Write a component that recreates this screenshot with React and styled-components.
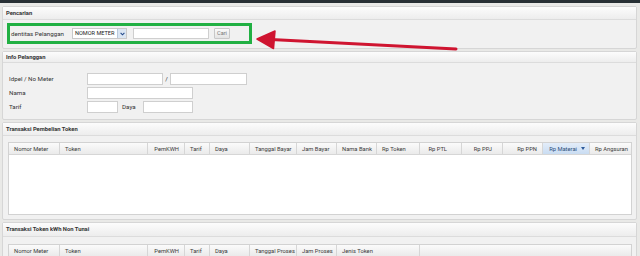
import React from 'react';
import styled, { createGlobalStyle } from 'styled-components';

const GlobalStyle = createGlobalStyle`
  body {
    margin: 0;
    background: #e9e9e7;
    font-family: Roboto, "Liberation Sans", Arial, sans-serif;
    color: #2b2b2b;
    overflow: hidden;
  }
`;

const TopBar = styled.div`
  height: 3px;
  background: #283035;
`;

const Page = styled.div`
  display: flex;
  flex-direction: column;
  gap: 2px;
  padding: 3px 0 0 2px;
`;

const Panel = styled.section`
  position: relative;
  width: 635px;
  box-sizing: border-box;
  border: 1px solid #d6d6d6;
  border-radius: 2px;
  background: #f1f1f1;
`;

const PanelHeader = styled.div`
  height: ${({ $h }) => $h || 12}px;
  line-height: ${({ $h }) => $h || 12}px;
  padding-left: 3px;
  font-size: 5.8px;
  font-weight: bold;
  color: #333;
  background: linear-gradient(#fcfcfc, #ededed);
  border-bottom: 1px solid #dcdcdc;
`;

const PanelBody = styled.div`
  padding: ${({ $pad }) => $pad};
`;

const SearchBox = styled.div`
  display: flex;
  align-items: center;
  width: 238px;
  height: 15px;
  border: 3px solid #21b043;
  padding-left: 1px;
`;

const Label = styled.span`
  font-size: 6.2px;
  color: #333;
  width: ${({ $w }) => $w}px;
  padding-left: ${({ $pl }) => $pl || 0}px;
  box-sizing: border-box;
  white-space: nowrap;
  flex: none;
`;

const Select = styled.div`
  display: flex;
  align-items: stretch;
  width: 55px;
  height: 11px;
  box-sizing: border-box;
  border: 1px solid #c9c9c9;
  background: #fff;
  font-size: 5.6px;
`;

const SelectText = styled.span`
  flex: 1;
  line-height: 9px;
  padding-left: 2px;
  color: #222;
  white-space: nowrap;
  overflow: hidden;
`;

const SelectArrow = styled.span`
  width: 8px;
  flex: none;
  display: flex;
  align-items: center;
  justify-content: center;
  background: #dbe6f3;
  border-left: 1px solid #b9c9dc;
`;

const Input = styled.div`
  width: ${({ $w }) => $w}px;
  height: ${({ $h }) => $h || 12}px;
  margin-left: ${({ $ml }) => $ml || 0}px;
  box-sizing: border-box;
  border: 1px solid #cfcfcf;
  background: #fff;
  flex: none;
`;

const Button = styled.div`
  width: 16px;
  height: 11px;
  margin-left: 5px;
  box-sizing: border-box;
  border: 1px solid #c8c8c8;
  border-radius: 1px;
  background: linear-gradient(#fafafa, #e4e4e4);
  font-size: 5.6px;
  color: #777;
  text-align: center;
  line-height: 9px;
`;

const Arrow = styled.svg`
  position: absolute;
  left: 250px;
  top: 15px;
`;

const FormGrid = styled.div`
  display: flex;
  flex-direction: column;
  gap: 2px;
`;

const FormRow = styled.div`
  display: flex;
  align-items: center;
  height: 12px;
`;

const Slash = styled.span`
  width: 7px;
  font-size: 6.2px;
  text-align: center;
`;

const Table = styled.div`
  width: 622px;
  border: 1px solid #d2d2d2;
  background: #fff;
`;

const HeadRow = styled.div`
  display: flex;
  height: 11px;
  background: linear-gradient(#fbfbfb, #eaeaea);
  border-bottom: 1px solid #d6d6d6;
`;

const HeadCell = styled.div`
  width: ${({ $w }) => $w}px;
  flex: ${({ $grow }) => ($grow ? 1 : 'none')};
  box-sizing: border-box;
  display: flex;
  align-items: center;
  justify-content: ${({ $right }) => ($right ? 'flex-end' : 'flex-start')};
  gap: 4px;
  padding: 0 ${({ $pr }) => $pr || 5}px 0 5px;
  font-size: 5.8px;
  color: ${({ $active }) => ($active ? '#2d4f7c' : '#3a3a3a')};
  white-space: nowrap;
  border-right: 1px solid #d6d6d6;
  background: ${({ $active }) =>
    $active ? 'linear-gradient(#e3edf9, #c9dcf2)' : 'transparent'};
  &:last-child {
    border-right: none;
  }
`;

const SortMark = styled.span`
  width: 0;
  height: 0;
  border-left: 2px solid transparent;
  border-right: 2px solid transparent;
  border-top: 3px solid #2d5a9a;
`;

const TableBody = styled.div`
  height: ${({ $h }) => $h}px;
`;

const purchaseCols = [
  { t: 'Nomor Meter', w: 51 },
  { t: 'Token', w: 88 },
  { t: 'PemKWH', w: 37, right: true },
  { t: 'Tarif', w: 25 },
  { t: 'Daya', w: 40 },
  { t: 'Tanggal Bayar', w: 47 },
  { t: 'Jam Bayar', w: 40 },
  { t: 'Nama Bank', w: 40 },
  { t: 'Rp Token', w: 43 },
  { t: 'Rp PTL', w: 42, right: true, pr: 14 },
  { t: 'Rp PPJ', w: 41, right: true, pr: 10 },
  { t: 'Rp PPN', w: 40, right: true, pr: 5 },
  { t: 'Rp Materai', w: 47, right: true, active: true, pr: 4 },
  { t: 'Rp Angsuran', w: 41, grow: true },
];

const nonCashCols = [
  { t: 'Nomor Meter', w: 51 },
  { t: 'Token', w: 88 },
  { t: 'PemKWH', w: 37, right: true },
  { t: 'Tarif', w: 25 },
  { t: 'Daya', w: 40 },
  { t: 'Tanggal Proses', w: 47 },
  { t: 'Jam Proses', w: 40 },
  { t: 'Jenis Token', w: 83 },
  { t: '', w: 0, grow: true },
];

const Grid = ({ cols, bodyHeight }) => (
  <Table>
    <HeadRow>
      {cols.map((c, i) => (
        <HeadCell
          key={i}
          $w={c.w}
          $right={c.right}
          $grow={c.grow}
          $active={c.active}
          $pr={c.pr}
        >
          {c.t}
          {c.active && <SortMark />}
        </HeadCell>
      ))}
    </HeadRow>
    {bodyHeight > 0 && <TableBody $h={bodyHeight} />}
  </Table>
);

const App = () => (
  <>
    <GlobalStyle />
    <TopBar />
    <Page>
      <Panel>
        <PanelHeader>Pencarian</PanelHeader>
        <PanelBody $pad="3px 0 4px 4px">
          <SearchBox>
            <Label $w={61}>dentitas Pelanggan</Label>
            <Select>
              <SelectText>NOMOR METER</SelectText>
              <SelectArrow>
                <svg width="5" height="4" viewBox="0 0 5 4">
                  <path d="M0.6 0.8 L2.5 2.8 L4.4 0.8" fill="none" stroke="#23498a" strokeWidth="1.1" />
                </svg>
              </SelectArrow>
            </Select>
            <Input $w={76} $h={11} $ml={6} />
            <Button>Cari</Button>
          </SearchBox>
        </PanelBody>
        <Arrow width="206" height="30" viewBox="0 0 206 30">
          <line x1="18" y1="17.5" x2="203" y2="27" stroke="#cf1430" strokeWidth="3" strokeLinecap="round" />
          <path d="M4 17 L22 9 L20.5 26.5 Z" fill="#cf1430" stroke="#cf1430" strokeWidth="1.5" strokeLinejoin="round" />
        </Arrow>
      </Panel>

      <Panel>
        <PanelHeader $h={10}>Info Pelanggan</PanelHeader>
        <PanelBody $pad="10px 0 6px 6px">
          <FormGrid>
            <FormRow>
              <Label $w={78}>Idpel / No Meter</Label>
              <Input $w={76} />
              <Slash>/</Slash>
              <Input $w={77} />
            </FormRow>
            <FormRow>
              <Label $w={78}>Nama</Label>
              <Input $w={106} />
            </FormRow>
            <FormRow>
              <Label $w={78}>Tarif</Label>
              <Input $w={31} />
              <Label $w={25} $pl={4}>Daya</Label>
              <Input $w={50} />
            </FormRow>
          </FormGrid>
        </PanelBody>
      </Panel>

      <Panel>
        <PanelHeader>Transaksi Pembelian Token</PanelHeader>
        <PanelBody $pad="6px 0 4px 5px">
          <Grid cols={purchaseCols} bodyHeight={59} />
        </PanelBody>
      </Panel>

      <Panel>
        <PanelHeader $h={13}>Transaksi Token kWh Non Tunai</PanelHeader>
        <PanelBody $pad="7px 0 4px 5px">
          <Grid cols={nonCashCols} bodyHeight={40} />
        </PanelBody>
      </Panel>
    </Page>
  </>
);

export default App;
